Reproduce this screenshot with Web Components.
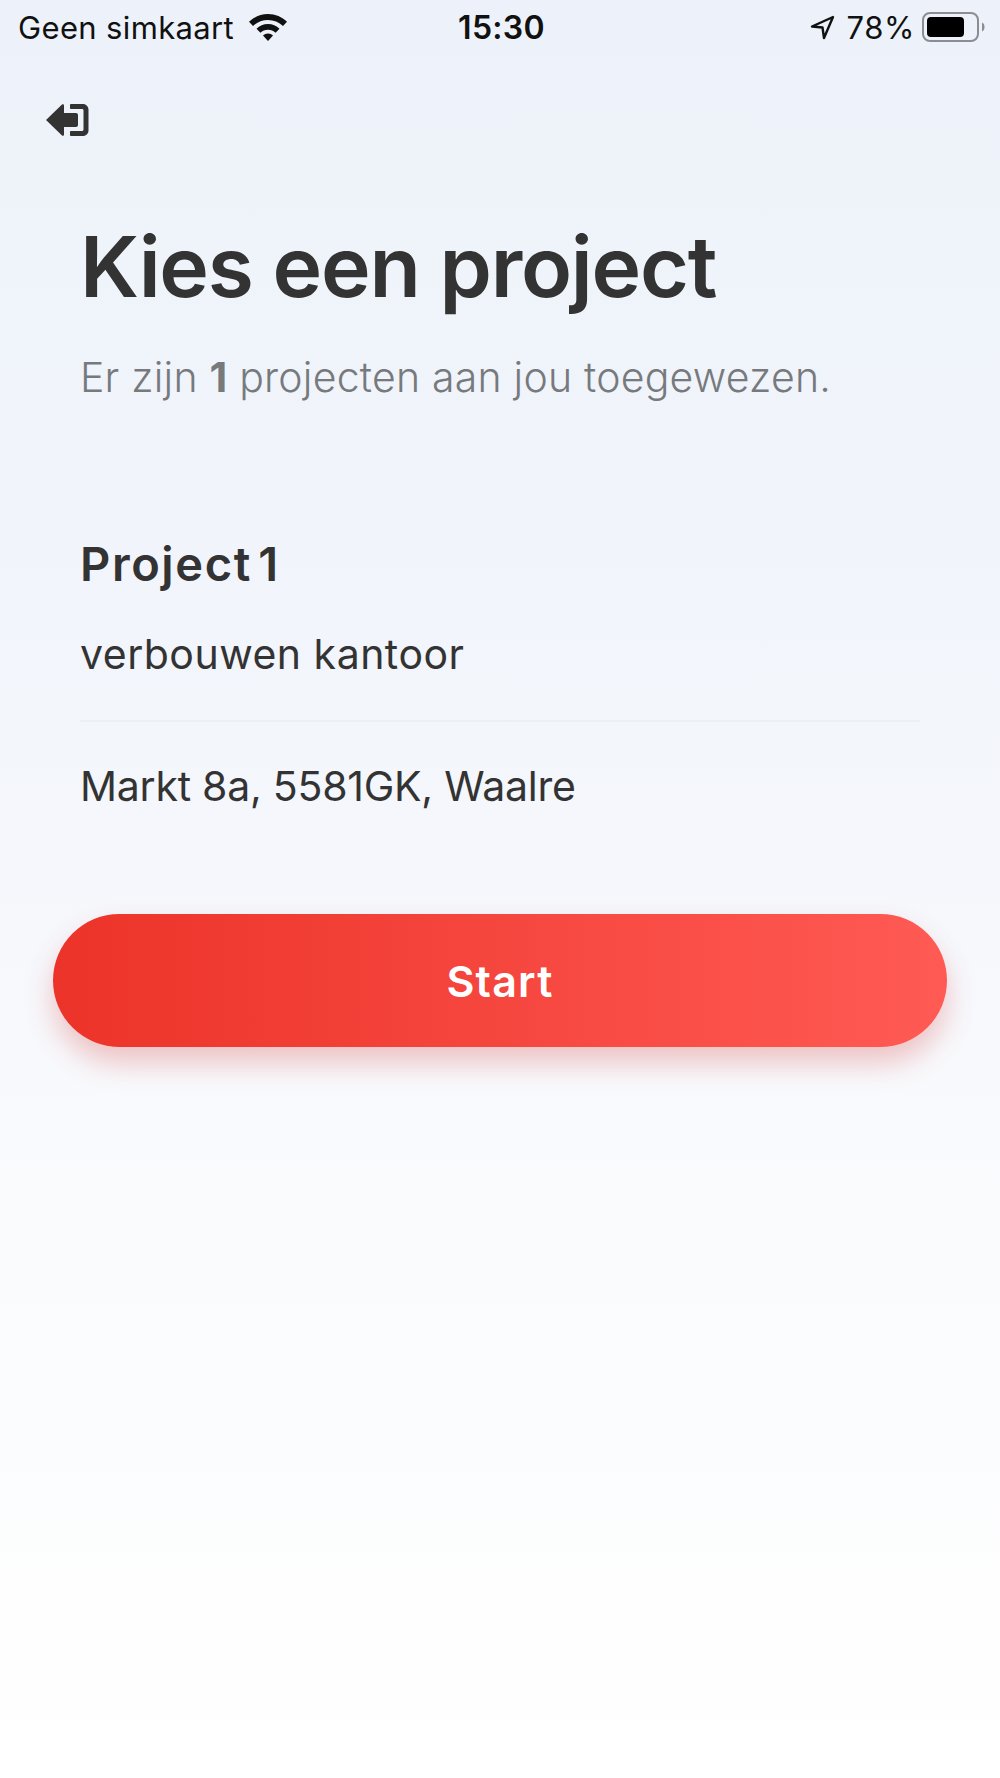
<!DOCTYPE html>
<html lang="nl">
<head>
<meta charset="utf-8">
<title>Kies een project</title>
<style>
    html, body { margin: 0; padding: 0; }
    body { font-family: "Inter", "Liberation Sans", sans-serif; }
</style>
</head>
<body>
<app-screen>
    <status-bar></status-bar>
    <back-button></back-button>
    <project-header count="1">Kies een project</project-header>
    <project-card name="Project 1" description="verbouwen kantoor" address="Markt 8a, 5581GK, Waalre"></project-card>
    <start-button>Start</start-button>
</app-screen>

<script>
class AppScreen extends HTMLElement {
    constructor() {
        super();
        this.attachShadow({ mode: 'open' });
    }

    connectedCallback() {
        this.shadowRoot.innerHTML = `
            <style>
                :host {
                    display: flex;
                    flex-direction: column;
                    min-height: 1778px;
                    box-sizing: border-box;
                    background: linear-gradient(180deg, #edf2fa 0%, #f2f5fb 35%, #fafbfd 70%, #ffffff 100%);
                    color: #333333;
                }
            </style>
            <slot></slot>
        `;
    }
}

class StatusBar extends HTMLElement {
    constructor() {
        super();
        this.attachShadow({ mode: 'open' });
    }

    connectedCallback() {
        this.shadowRoot.innerHTML = `
            <style>
                :host {
                    display: grid;
                    grid-template-columns: 1fr auto 1fr;
                    align-items: center;
                    height: 54px;
                    padding: 0 15px 0 18px;
                    font-family: "Inter", "Liberation Sans", sans-serif;
                    font-size: 31px;
                    color: #111111;
                }
                .left, .right { display: flex; align-items: center; }
                .right { justify-content: flex-end; }
                .carrier { letter-spacing: 0.35px; }
                .time { font-weight: 600; font-size: 32px; letter-spacing: 0.3px; }
                .level { letter-spacing: 0.6px; }
                .wifi { margin-left: 14px; }
                .arrow { margin-right: 11px; }
                .battery { margin-left: 7px; }
            </style>
            <div class="left">
                <span class="carrier">Geen simkaart</span>
                <svg class="wifi" width="40" height="30" viewBox="0 0 40 30">
                    <path d="M20 2C12.500 2 6 5 1 9.800L5 14C9 10.200 14.300 8 20 8s11 2.200 15 6l4-4.200C34 5 27.500 2 20 2z" fill="#111"/>
                    <path d="M20 12c-4.500 0-8.500 1.800-11.500 4.700l3.900 4C14.400 18.800 17 17.800 20 17.800s5.600 1 7.600 2.900l3.900-4C28.500 13.800 24.500 12 20 12z" fill="#111"/>
                    <path d="M20 21.500c-2 0-3.700 .8-5 2L20 29l5-5.500c-1.300-1.200-3-2-5-2z" fill="#111"/>
                </svg>
            </div>
            <span class="time">15:30</span>
            <div class="right">
                <svg class="arrow" width="25" height="25" viewBox="0 0 25 25">
                    <path d="M23 2L2 11.500l10.500 1L14 23z" fill="none" stroke="#111" stroke-width="2.400" stroke-linejoin="round"/>
                </svg>
                <span class="level">78%</span>
                <svg class="battery" width="63" height="30" viewBox="0 0 63 30">
                    <rect x="1" y="1" width="55" height="28" rx="7" fill="none" stroke="#8b8d90" stroke-width="2"/>
                    <rect x="5" y="5" width="37" height="20" rx="4" fill="#000"/>
                    <path d="M60 10.500c1.800 .5 2.500 2.500 2.500 4.500s-.7 4-2.500 4.500z" fill="#8b8d90"/>
                </svg>
            </div>
        `;
    }
}

class BackButton extends HTMLElement {
    constructor() {
        super();
        this.attachShadow({ mode: 'open' });
    }

    connectedCallback() {
        this.shadowRoot.innerHTML = `
            <style>
                :host {
                    display: block;
                    padding: 49px 0 0 46px;
                    height: 34px;
                }
                svg { display: block; }
            </style>
            <svg width="44" height="34" viewBox="0 0 44 34">
                <path d="M0 17L16 1.500c.8-.7 2-.2 2 .9V10h12c1.100 0 2 .9 2 2v10c0 1.100-.9 2-2 2H18v7.600c0 1.100-1.200 1.600-2 .9z" fill="#333"/>
                <path d="M25 1h12c3 0 5.500 2.500 5.500 5.500v21c0 3-2.500 5.500-5.500 5.500H25c-.6 0-1-.4-1-1v-3c0-.6.4-1 1-1h11c1 0 1.500-.6 1.500-1.500V7.500C37.500 6.600 37 6 36 6H25c-.6 0-1-.4-1-1V2c0-.6.4-1 1-1z" fill="#333"/>
            </svg>
        `;
    }
}

class ProjectHeader extends HTMLElement {
    constructor() {
        super();
        this.attachShadow({ mode: 'open' });
    }

    connectedCallback() {
        const count = this.getAttribute('count');

        this.shadowRoot.innerHTML = `
            <style>
                :host {
                    display: block;
                    padding: 81px 80px 0;
                }
                h1 {
                    margin: 0;
                    font-family: "Inter", "Liberation Sans", sans-serif;
                    font-size: 84px;
                    line-height: 97px;
                    font-weight: 600;
                    letter-spacing: -1.25px;
                    color: #333333;
                    white-space: nowrap;
                }
                p {
                    margin: 37px 0 0;
                    font-family: "Inter", "Liberation Sans", sans-serif;
                    font-size: 41px;
                    line-height: 50px;
                    font-weight: 300;
                    letter-spacing: 0.22px;
                    color: #777a7d;
                    white-space: nowrap;
                }
                b { font-weight: 700; }
            </style>
            <h1><slot></slot></h1>
            <p>Er zijn <b>${count}</b> projecten aan jou toegewezen.</p>
        `;
    }
}

class ProjectCard extends HTMLElement {
    constructor() {
        super();
        this.attachShadow({ mode: 'open' });
    }

    connectedCallback() {
        const name = this.getAttribute('name');
        const description = this.getAttribute('description');
        const address = this.getAttribute('address');

        this.shadowRoot.innerHTML = `
            <style>
                :host {
                    display: block;
                    margin: 0 80px;
                    padding-top: 134px;
                    font-family: "Inter", "Liberation Sans", sans-serif;
                    color: #333333;
                }
                h2 {
                    margin: 0;
                    font-size: 47px;
                    line-height: 56px;
                    font-weight: 600;
                    letter-spacing: 1.6px;
                    word-spacing: -7px;
                }
                .line {
                    font-size: 41px;
                    line-height: 48px;
                    font-weight: 400;
                }
                .description {
                    margin-top: 38px;
                    padding-bottom: 42px;
                    border-bottom: 2px solid #edeff3;
                    letter-spacing: 0.5px;
                }
                .address {
                    margin-top: 40px;
                    letter-spacing: -0.25px;
                }
            </style>
            <h2>${name}</h2>
            <div class="line description">${description}</div>
            <div class="line address">${address}</div>
        `;
    }
}

class StartButton extends HTMLElement {
    constructor() {
        super();
        this.attachShadow({ mode: 'open' });
    }

    connectedCallback() {
        this.shadowRoot.innerHTML = `
            <style>
                :host {
                    display: flex;
                    align-items: center;
                    justify-content: center;
                    height: 133px;
                    margin: 104px 53px 0;
                    border-radius: 67px;
                    background: linear-gradient(90deg, #ec3329 0%, #ff5a54 100%);
                    box-shadow: 0 16px 28px rgba(215, 70, 70, 0.3);
                    font-family: "Inter", "Liberation Sans", sans-serif;
                    font-size: 43px;
                    font-weight: 600;
                    letter-spacing: 1.2px;
                    color: #ffffff;
                }
            </style>
            <slot></slot>
        `;
    }
}

customElements.define('app-screen', AppScreen);
customElements.define('status-bar', StatusBar);
customElements.define('back-button', BackButton);
customElements.define('project-header', ProjectHeader);
customElements.define('project-card', ProjectCard);
customElements.define('start-button', StartButton);
</script>
</body>
</html>
